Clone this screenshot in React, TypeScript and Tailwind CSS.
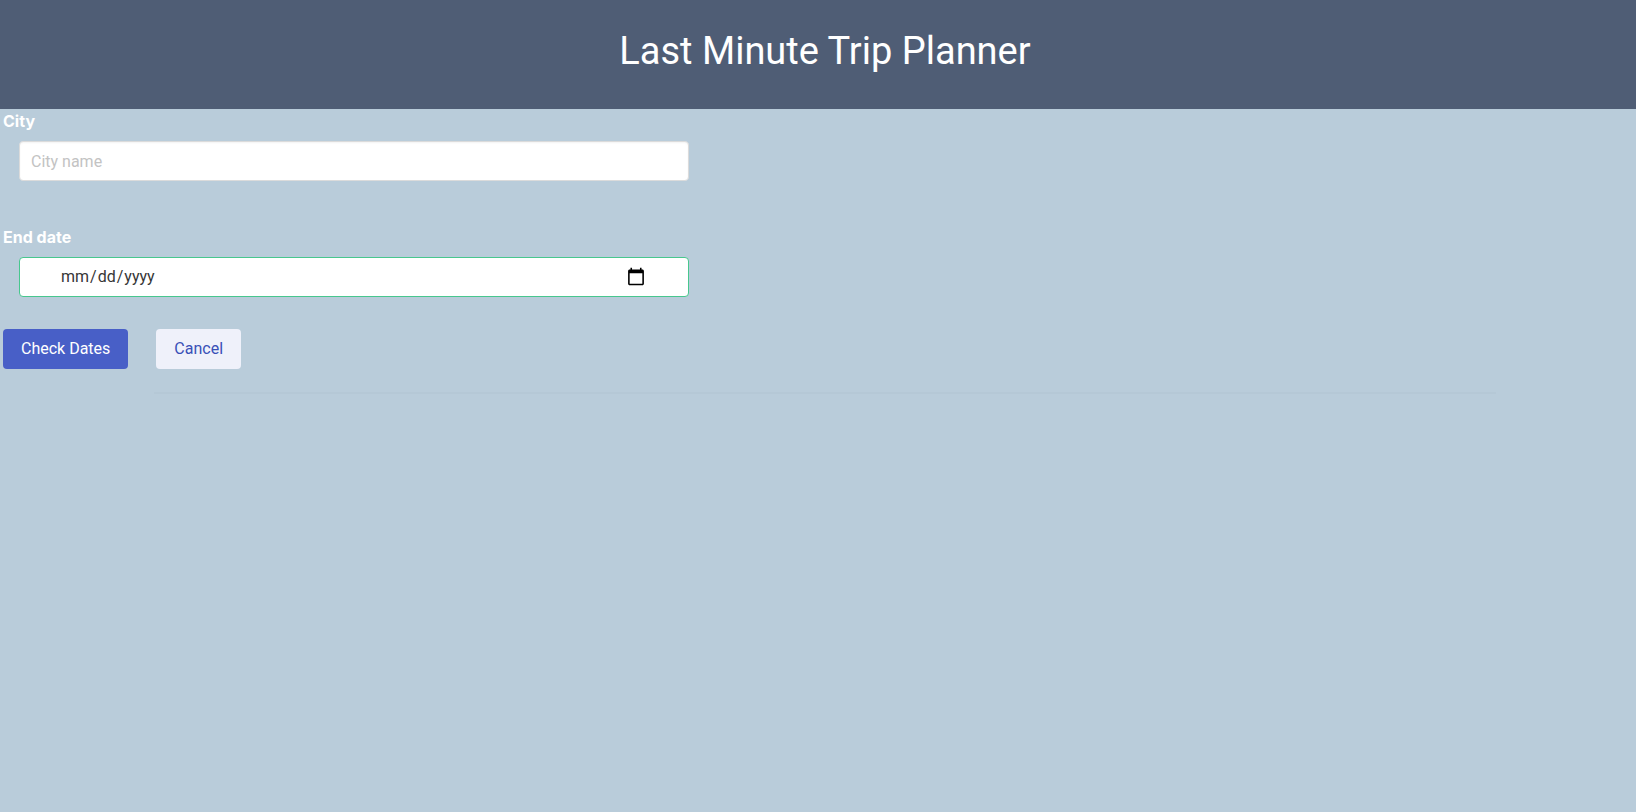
export default function App() {
  return (
    <div className="min-h-screen bg-[#b9ccda] font-['Roboto',sans-serif] text-base text-[#4a4a4a]">
      <header className="bg-[#4f5d75] pt-[27px] pb-[34px] pl-3.5 text-center">
        <h1 className="text-[38px] leading-[48px] font-normal text-white">Last Minute Trip Planner</h1>
      </header>
      <main>
        <form className="pl-[3px]" onSubmit={(event) => event.preventDefault()}>
          <div className="flex flex-col items-start">
            <label htmlFor="city" className="mb-[7px] font-['Inter',sans-serif] text-base leading-[25px] font-bold text-white">
              City
            </label>
            <input
              id="city"
              type="text"
              placeholder="City name"
              className="ml-4 h-10 w-[41%] rounded border border-[#dbdbdb] bg-white px-[11px] text-base text-[#363636] shadow-[inset_0_1px_2px_rgba(10,10,10,0.05)] placeholder:text-[#c3c3c3]"
            />
          </div>
          <div className="mt-11 flex flex-col items-start">
            <label htmlFor="end-date" className="mb-[7px] font-['Inter',sans-serif] text-base leading-[25px] font-bold text-white">
              End date
            </label>
            <input
              id="end-date"
              type="date"
              className="ml-4 h-10 w-[41%] rounded border border-[#48c78e] bg-white px-10 text-base text-[#363636] [&::-webkit-calendar-picker-indicator]:size-5"
            />
          </div>
          <div className="mt-8 flex gap-7">
            <button type="submit" className="h-10 rounded bg-[#485fc7] px-[18px] text-base text-white">
              Check Dates
            </button>
            <button type="button" className="h-10 rounded bg-[#eff1fa] px-[18px] text-base text-[#3850b7]">
              Cancel
            </button>
          </div>
        </form>
        <div className="mt-[23px] pl-3.5">
          <hr className="mx-auto h-0.5 w-[82vw] border-0 bg-[#b5c8d6]" />
        </div>
      </main>
    </div>
  );
}
